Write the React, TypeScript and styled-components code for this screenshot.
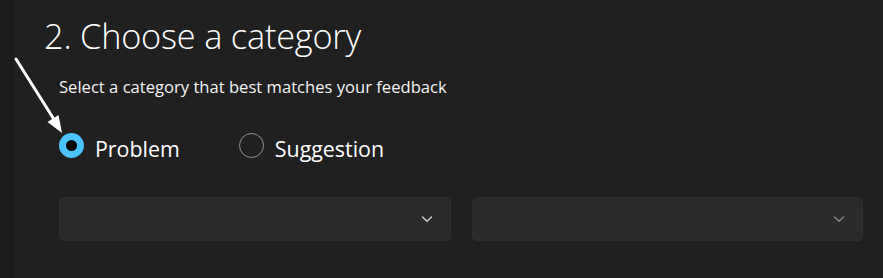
import React from "react";
import styled, { createGlobalStyle } from "styled-components";

const Global = createGlobalStyle`
  html, body { margin: 0; padding: 0; background: #202020; }
  body { font-family: "Open Sans", "Noto Sans", sans-serif; color: #ffffff; }
`;

const Page = styled.div`
  position: relative;
  width: 883px;
  height: 278px;
  display: flex;
  background: #202020;
  overflow: hidden;
`;

const Rail = styled.div`
  width: 13px;
  flex: none;
  background: #1c1c1c;
  border-right: 1px solid #191919;
`;

const Main = styled.div`
  flex: 1;
  padding: 12px 0 0 30px;
`;

const Title = styled.h1`
  margin: 0;
  font-size: 34.3px;
  font-weight: 300;
  line-height: 48px;
  letter-spacing: -0.2px;
`;

const Body = styled.div`
  padding-left: 15px;
`;

const Subtitle = styled.p`
  margin: 16px 0 0;
  font-size: 16.6px;
  line-height: 22px;
  color: #f3f3f3;
`;

const RadioRow = styled.div`
  display: flex;
  gap: 59px;
  margin-top: 35px;
  height: 30px;
  align-items: center;
`;

const RadioLabel = styled.label`
  display: flex;
  align-items: center;
  gap: 11px;
  font-size: 21.4px;
  color: #ffffff;
`;

const Circle = styled.span<{ $checked?: boolean }>`
  box-sizing: border-box;
  width: 25px;
  height: 25px;
  border-radius: 50%;
  flex: none;
  ${(p) =>
    p.$checked
      ? `border: 7px solid #4cc2ff; background: #000;`
      : `border: 1.6px solid #8f8f8f; background: transparent;`}
  margin-top: -6px;
`;

const Selects = styled.div`
  display: flex;
  gap: 21px;
  margin-top: 34px;
  width: 804px;
`;

const Select = styled.div<{ $dim?: boolean }>`
  flex: 1;
  height: 44px;
  border-radius: 5px;
  background: #2b2b2b;
  border: 1px solid #2e2e2e;
  box-sizing: border-box;
  display: flex;
  align-items: center;
  justify-content: flex-end;
  padding-right: 17px;
  color: ${(p) => (p.$dim ? "#8a8a8a" : "#d0d0d0")};
`;

const Arrow = styled.svg`
  position: absolute;
  left: 0;
  top: 0;
  pointer-events: none;
`;

const Chevron = () => (
  <svg width="12" height="8" viewBox="0 0 12 8">
    <path d="M1.5 2 L6 6.3 L10.5 2" fill="none" stroke="currentColor" strokeWidth="1.3" strokeLinecap="round" strokeLinejoin="round" />
  </svg>
);

export default function App() {
  return (
    <Page>
      <Global />
      <Rail />
      <Main>
        <Title>2. Choose a category</Title>
        <Body>
          <Subtitle>Select a category that best matches your feedback</Subtitle>
          <RadioRow>
            <RadioLabel>
              <Circle $checked />
              Problem
            </RadioLabel>
            <RadioLabel>
              <Circle />
              Suggestion
            </RadioLabel>
          </RadioRow>
          <Selects>
            <Select>
              <Chevron />
            </Select>
            <Select $dim>
              <Chevron />
            </Select>
          </Selects>
        </Body>
      </Main>
      <Arrow width="80" height="140" viewBox="0 0 80 140">
        <line x1="16" y1="59" x2="55" y2="121" stroke="#fff" strokeWidth="3" strokeLinecap="round" />
        <polygon points="62,133 47.5,122 58.5,115" fill="#fff" />
      </Arrow>
    </Page>
  );
}
